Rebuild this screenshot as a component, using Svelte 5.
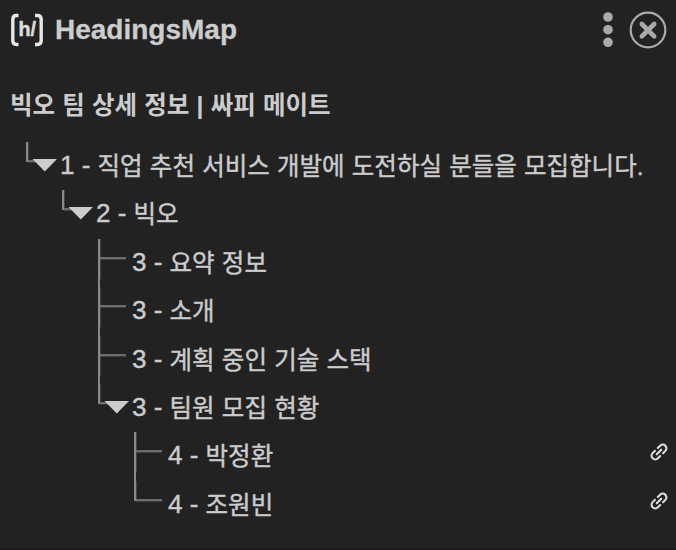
<script>
  const tree = [
    {
      level: 1,
      title: '직업 추천 서비스 개발에 도전하실 분들을 모집합니다.',
      children: [
        {
          level: 2,
          title: '빅오',
          children: [
            { level: 3, title: '요약 정보' },
            { level: 3, title: '소개' },
            { level: 3, title: '계획 중인 기술 스택' },
            {
              level: 3,
              title: '팀원 모집 현황',
              children: [
                { level: 4, title: '박정환', anchor: true },
                { level: 4, title: '조원빈', anchor: true }
              ]
            }
          ]
        }
      ]
    }
  ];
</script>

{#snippet branch(nodes)}
  <ul>
    {#each nodes as node, i}
      {@const last = i === nodes.length - 1}
      <li>
        <div class="row">
          <svg class="joint" viewBox="0 0 34 48.4" aria-hidden="true">
            <rect x="0" y="0" width="2" height={last ? 20 : 49.4} fill="#888" />
            <rect x="2" y="0" width="1" height={last ? 18 : 40} fill="#444" />
            <rect x="2" y="18" width={node.children ? 8 : 26} height="2.4" fill="#6c6c6c" />
            {#if node.children}
              <path d="M6.500 17H31L18.800 29.500Z" fill="#ccc" />
            {/if}
          </svg>
          <span class="level">{node.level} -&nbsp;</span>
          <span class="title">{node.title}</span>
          {#if node.anchor}
            <svg class="link" viewBox="0 0 20 20" fill="none" stroke="#dcdcdc" stroke-width="2.1" stroke-linecap="round">
              <g transform="rotate(-45 10 10)">
                <path d="M8 6.300H4.700a3.700 3.700 0 0 0 0 7.400H8" />
                <path d="M12 6.300H15.300a3.700 3.700 0 0 1 0 7.400H12" />
                <path d="M6.800 10H13.200" />
              </g>
            </svg>
          {/if}
        </div>
        {#if node.children}
          {@render branch(node.children)}
        {/if}
      </li>
    {/each}
  </ul>
{/snippet}

<main>
  <header>
    <svg class="logo" viewBox="0 0 34 34" aria-hidden="true">
      <path d="M8.500 2.500H6.500Q2.800 2.500 2.800 6.500V27.500Q2.800 31.500 6.500 31.500H8.500M25 2.500H27.500Q31.200 2.500 31.200 6.500V27.500Q31.200 31.500 27.500 31.500H25" fill="none" stroke="#e6e6e6" stroke-width="3.400" />
      <text x="8.500" y="23.200" fill="#ddd" stroke="#ddd" stroke-width="0.500" font-size="20" font-weight="bold" textLength="17.500" lengthAdjust="spacingAndGlyphs">h/</text>
    </svg>
    <h1>HeadingsMap</h1>
    <svg class="dots" viewBox="0 0 10 36" fill="#aaa"><circle cx="5" cy="5" r="4.800" /><circle cx="5" cy="17.700" r="4.800" /><circle cx="5" cy="30.300" r="4.800" /></svg>
    <svg class="close" viewBox="0 0 38 38" fill="none" stroke="#aaa">
      <circle cx="19" cy="19" r="17.300" stroke-width="2.200" />
      <path d="M12.800 13L25.200 25.400M25.200 13L12.800 25.400" stroke-width="4.600" stroke-linecap="round" />
    </svg>
  </header>
  <h2>빅오 팀 상세 정보 | 싸피 메이트</h2>
  <nav>{@render branch(tree)}</nav>
  <div class="edge"></div>
</main>

<style>
  :global(body) { margin: 0; background: #222; }
  main {
    box-sizing: border-box;
    width: 676px;
    height: 550px;
    display: flex;
    flex-direction: column;
    overflow: hidden;
    background: #222;
    color: #ccc;
    font-family: "Liberation Sans", "Noto Sans CJK KR", sans-serif;
    font-size: 26px;
  }
  header { display: flex; align-items: center; height: 60px; padding: 0 9px 0 10px; flex: none; }
  .logo { width: 34px; height: 34px; }
  h1 { margin: 0 auto 0 11px; font-size: 28px; line-height: 32px; -webkit-text-stroke: 0.3px #ccc; }
  .dots { width: 10px; height: 36px; margin-right: 16.5px; }
  .close { width: 38px; height: 38px; }
  h2 { margin: 26px 0 0 10px; height: 56px; flex: none; font-size: 24.5px; line-height: 40px; word-spacing: 0.4px; white-space: nowrap; }
  nav { flex: 1; padding-left: 26px; }
  ul { list-style: none; margin: 0; padding: 0; }
  ul ul { padding-left: 36px; }
  .row { display: flex; height: 48.4px; white-space: nowrap; }
  .joint { width: 34px; height: 48.4px; flex: none; overflow: visible; }
  .level, .title { -webkit-text-stroke: 0.4px #ccc; }
  .level { line-height: 47px; }
  .title { font-size: 24.5px; line-height: 49px; word-spacing: 0.4px; }
  .link { width: 20px; height: 20px; margin: 10px 7px 0 auto; }
  .edge { height: 2px; flex: none; background: #1d181d; }
</style>
